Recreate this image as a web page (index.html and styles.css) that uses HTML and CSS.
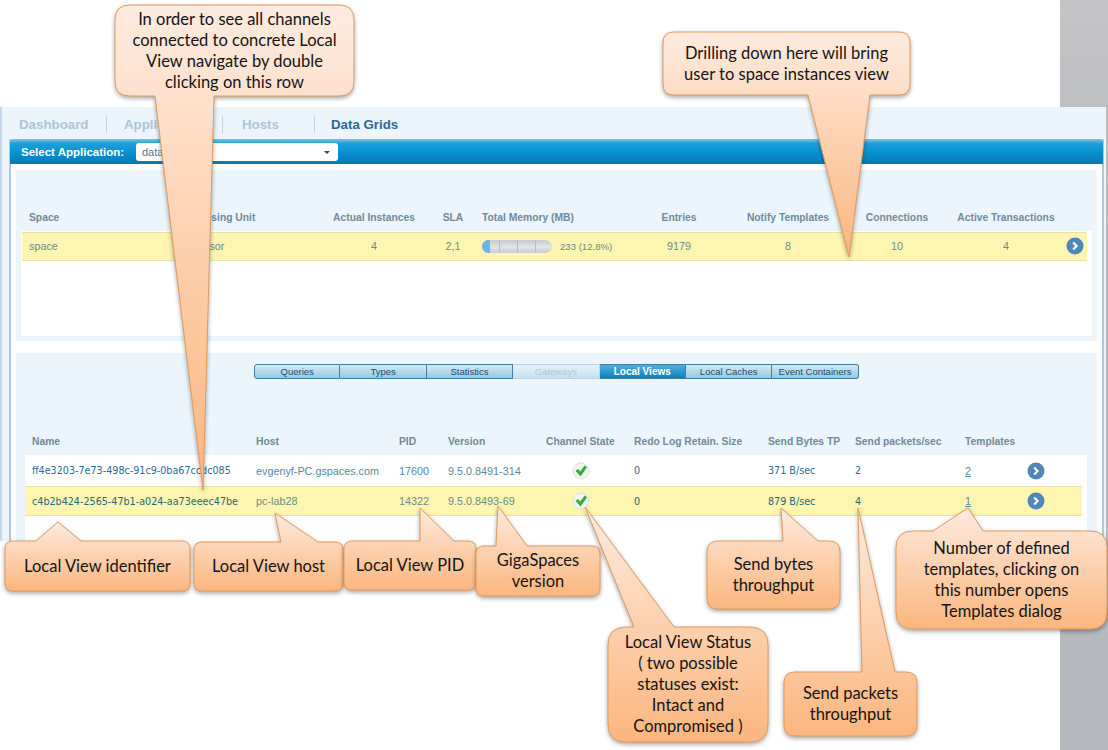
FILE: index.html
```html
<!DOCTYPE html>
<html lang="en">
<head>
  <meta charset="UTF-8" />
  <title>Data Grids - Local Views</title>
  <link rel="stylesheet" href="styles.css">
</head>
<body>
  <svg class="icon-defs" width="0" height="0" aria-hidden="true">
    <symbol id="drill" viewBox="0 0 18 18">
      <circle cx="9" cy="9" r="8.5" fill="#4f88b8" />
      <path d="M7.2 5.4 10.6 9 7.2 12.6" fill="none" stroke="#fff" stroke-width="2.2" />
    </symbol>
    <symbol id="ok" viewBox="0 0 18 18">
      <circle cx="9" cy="9" r="8" fill="#f4f7f0" stroke="#d9e3d6" />
      <path d="M3.4 8.8 6.2 7 8.2 9.6 12.6 3.6 15 5.2 8.6 14.6Z" fill="#2fae3c" />
    </symbol>
    <linearGradient id="calloutFill" x1="0" y1="0" x2="0" y2="1">
      <stop offset="0" stop-color="#feebdf" />
      <stop offset="1" stop-color="#fbb67e" />
    </linearGradient>
  </svg>

  <div class="page">
    <div class="panel">
      <nav class="nav">
        <span class="nav-item">Dashboard</span>
        <span class="nav-item">Applications</span>
        <span class="nav-item">Hosts</span>
        <span class="nav-item active">Data Grids</span>
      </nav>

      <div class="card">
        <div class="app-bar">
          <span class="app-label">Select Application:</span>
          <div class="app-select">datagrid<span class="caret"></span></div>
        </div>

        <section class="section top">
          <div class="cols-space head">
            <span>Space</span>
            <span>Processing Unit</span>
            <span class="mid">Actual Instances</span>
            <span class="mid">SLA</span>
            <span>Total Memory (MB)</span>
            <span class="mid">Entries</span>
            <span class="mid">Notify Templates</span>
            <span class="mid">Connections</span>
            <span class="mid">Active Transactions</span>
          </div>
          <div class="table space-table">
            <div class="cols-space row picked space-row">
              <span>space</span>
              <span>processor</span>
              <span class="mid">4</span>
              <span class="mid">2,1</span>
              <span class="memory">
                <span class="meter"><span class="meter-fill" style="width: 11%"></span></span>
                233 (12.8%)
              </span>
              <span class="mid">9179</span>
              <span class="mid">8</span>
              <span class="mid">10</span>
              <span class="mid">4</span>
              <svg class="drill"><use href="#drill" /></svg>
            </div>
          </div>
        </section>

        <section class="section bottom">
          <div class="tabs">
            <span class="tab">Queries</span>
            <span class="tab">Types</span>
            <span class="tab">Statistics</span>
            <span class="tab off">Gateways</span>
            <span class="tab on">Local Views</span>
            <span class="tab">Local Caches</span>
            <span class="tab">Event Containers</span>
          </div>

          <div class="cols-view head view-head">
            <span>Name</span>
            <span>Host</span>
            <span>PID</span>
            <span>Version</span>
            <span>Channel State</span>
            <span>Redo Log Retain. Size</span>
            <span>Send Bytes TP</span>
            <span>Send packets/sec</span>
            <span>Templates</span>
          </div>

          <div class="table view-table">
            <div class="cols-view row view-row">
              <span class="mono">ff4e3203-7e73-498c-91c9-0ba67ccdc085</span>
              <span>evgenyf-PC.gspaces.com</span>
              <span>17600</span>
              <span>9.5.0.8491-314</span>
              <svg class="state"><use href="#ok" /></svg>
              <span class="mono">0</span>
              <span class="mono">371 B/sec</span>
              <span class="mono">2</span>
              <a class="link">2</a>
              <svg class="drill"><use href="#drill" /></svg>
            </div>
            <div class="cols-view row picked view-row picked-view">
              <span class="mono">c4b2b424-2565-47b1-a024-aa73eeec47be</span>
              <span>pc-lab28</span>
              <span>14322</span>
              <span>9.5.0.8493-69</span>
              <svg class="state"><use href="#ok" /></svg>
              <span class="mono">0</span>
              <span class="mono">879 B/sec</span>
              <span class="mono">4</span>
              <a class="link">1</a>
              <svg class="drill"><use href="#drill" /></svg>
            </div>
          </div>
        </section>
      </div>
    </div>
  </div>

  <!-- callout shapes, the tails point at the columns they explain -->
  <svg class="callout-shapes" width="1108" height="750" aria-hidden="true">
    <path d="M130 5H339Q354 5 354 20V81Q354 96 339 96H214L203 490 155 96H130Q115 96 115 81V20Q115 5 130 5Z" />
    <path d="M674 32H899Q910 32 910 43V84Q910 95 899 95H870L849 257 808 95H674Q663 95 663 84V43Q663 32 674 32Z" />
    <path d="M13 541H36L58 522 81 541H182Q190 541 190 549V583Q190 591 182 591H13Q5 591 5 583V549Q5 541 13 541Z" />
    <path d="M202 542H281L275 513 318 542H335Q343 542 343 550V583Q343 591 335 591H202Q194 591 194 583V550Q194 542 202 542Z" />
    <path d="M352 541H420L420 508 454 541H468Q476 541 476 549V582Q476 590 468 590H352Q344 590 344 582V549Q344 541 352 541Z" />
    <path d="M484 546H496L498 506 527 546H592Q600 546 600 554V588Q600 596 592 596H484Q476 596 476 588V554Q476 546 484 546Z" />
    <path d="M626 627H634L585 507 674 627H750Q768 627 768 645V724Q768 742 750 742H626Q608 742 608 724V645Q608 627 626 627Z" />
    <path d="M718 541H783L781 508 818 541H829Q840 541 840 552V598Q840 609 829 609H718Q707 609 707 598V552Q707 541 718 541Z" />
    <path d="M795 672H862L858 508 895 672H906Q917 672 917 683V725Q917 736 906 736H795Q784 736 784 725V683Q784 672 795 672Z" />
    <path d="M913 531H933L968 508 983 531H1090Q1107 531 1107 548V612Q1107 629 1090 629H913Q896 629 896 612V548Q896 531 913 531Z" />
  </svg>

  <div class="callout c-row">In order to see all channels<br>connected to concrete Local<br>View navigate by double<br>clicking on this row</div>
  <div class="callout c-drill">Drilling down here will bring<br>user to space instances view</div>
  <div class="callout c-name">Local View identifier</div>
  <div class="callout c-host">Local View host</div>
  <div class="callout c-pid">Local View PID</div>
  <div class="callout c-version">GigaSpaces<br>version</div>
  <div class="callout c-status">Local View Status<br>( two possible<br>statuses exist:<br>Intact and<br>Compromised )</div>
  <div class="callout c-bytes">Send bytes<br>throughput</div>
  <div class="callout c-packets">Send packets<br>throughput</div>
  <div class="callout c-templates">Number of defined<br>templates, clicking on<br>this number opens<br>Templates dialog</div>
</body>
</html>
```

FILE: styles.css
```css
html, body {
  margin: 0;
  padding: 0;
}
body {
  font-family: "Liberation Sans", Arial, sans-serif;
  font-size: 11px;
  position: relative;
  width: 1108px;
  height: 750px;
  overflow: hidden;
  background: #fff;
}
.icon-defs {
  position: absolute;
}
.page {
  height: 750px;
  padding-top: 107px;
  box-sizing: border-box;
  background:
    linear-gradient(to right, #fff 1060px, transparent 1060px),
    linear-gradient(#c4c3c6, #b6b9bd 30%);
}

/* application frame */
.panel {
  width: 1106px;
  height: 434px;
  box-sizing: border-box;
  border-left: 2px solid #c6d9ea;
  background: #ecf5fb;
  overflow: hidden;
}
.nav {
  display: grid;
  grid-template-columns: 105px 116px 92px auto;
  align-items: center;
  height: 34px;
  margin-bottom: -2px;
  font-size: 13.3px;
  font-weight: bold;
  color: #a9c6d8;
}
.nav-item {
  height: 17px;
  line-height: 17px;
  padding-left: 17px;
  border-right: 1px solid #bfd4e1;
}
.nav-item:nth-child(3) {
  padding-left: 19px;
}
.nav-item.active {
  padding-left: 16px;
  border-right: 0;
  color: #2a6a96;
}
.card {
  width: 1095px;
  height: 402px;
  margin-left: 7px;
  box-sizing: border-box;
  border: solid #a9cbdf;
  border-width: 0 2px;
  background: #fff;
}
.app-bar {
  display: flex;
  align-items: center;
  height: 25px;
  margin: 0 -1px;
  padding-left: 11px;
  border-radius: 3px 3px 0 0;
  background: linear-gradient(#78c3e7, #1f9fdb 18%, #0a96d6 45%, #0679b4);
}
.app-label {
  width: 115px;
  font-size: 11.5px;
  font-weight: bold;
  color: #fff;
}
.app-select {
  position: relative;
  width: 196px;
  height: 18px;
  line-height: 18px;
  padding-left: 6px;
  border-radius: 3px;
  background: #fff;
  color: #4d7a98;
}
.caret {
  position: absolute;
  right: 8px;
  top: 8px;
  border: 3px solid transparent;
  border-top-color: #444;
  border-bottom: 0;
}

/* sections */
.section {
  width: 1081px;
  margin-left: 5px;
  background: #ebf5fb;
}
.section.top {
  height: 171px;
  margin-top: 6px;
  padding-top: 38px;
  box-sizing: border-box;
}
.section.bottom {
  height: 200px;
  margin-top: 12px;
  padding-top: 11px;
  box-sizing: border-box;
}
.table {
  background: #fff;
}
.space-table {
  width: 1071px;
  height: 105px;
  margin: 5px 0 0 5px;
  padding: 1px 0 0 1px;
  box-sizing: border-box;
}
.view-table {
  width: 1062px;
  height: 100px;
  margin: 5px 0 0 9px;
}

/* column sets */
.cols-space {
  display: grid;
  grid-template-columns: 148px 147px 100px 58px 150px 94px 124px 94px 124px auto;
  align-items: center;
  padding-left: 7px;
}
.head.cols-space {
  padding-left: 13px;
  font-size: 10.3px;
}
.cols-view {
  display: grid;
  grid-template-columns: 224px 143px 49px 98px 88px 134px 87px 110px 62px auto;
  align-items: center;
  padding-left: 7px;
}
.head.cols-view {
  padding-left: 16px;
}
.head {
  height: 18px;
  font-size: 10.3px;
  font-weight: bold;
  color: #71899a;
}
.view-head {
  margin-top: 53px;
}
.mid {
  text-align: center;
}

/* rows */
.row {
  font-size: 10.8px;
  color: #5a87a5;
}
.picked {
  background: #fdf5b0;
  border: solid #ecdfab;
  border-width: 1px 0;
  box-sizing: border-box;
  color: #6c8b8a;
}
.space-row {
  width: 1065px;
  height: 29px;
  padding-bottom: 1px;
}
.view-row {
  height: 31px;
}
.picked-view {
  width: 1057px;
  height: 30px;
}
.mono {
  font-family: "DejaVu Sans", Verdana, sans-serif;
  font-size: 9.6px;
  color: #2c6b93;
}
.picked .mono {
  color: #1f6a78;
}
.link {
  color: #5a87a5;
  text-decoration: underline;
}
.drill {
  width: 18px;
  height: 18px;
}
.space-row .drill {
  margin-left: -2px;
}
.state {
  width: 18px;
  height: 18px;
  margin-left: 26px;
}

/* memory meter */
.memory {
  display: flex;
  align-items: center;
  gap: 8px;
  font-size: 9.6px;
}
.meter {
  display: block;
  width: 70px;
  height: 13px;
  border-radius: 7px;
  overflow: hidden;
  background:
    repeating-linear-gradient(to right, transparent 0 17px, #b9bcc1 17px 18px),
    linear-gradient(#c6c9ce, #e3e4e6 55%, #c9cbd0);
}
.meter-fill {
  display: block;
  height: 13px;
  background: #6ab6e4;
}

/* tabs */
.tabs {
  display: flex;
  width: 605px;
  height: 15px;
  margin-left: 238px;
}
.tab {
  width: 86.4px;
  box-sizing: border-box;
  line-height: 13px;
  text-align: center;
  font-size: 9.5px;
  color: #1f4c6a;
  border: 1px solid #427fa4;
  border-left-width: 0;
  background: linear-gradient(#d4e9f3, #93c9e2);
}
.tab:first-child {
  border-left-width: 1px;
  border-radius: 3px 0 0 3px;
}
.tab:last-child {
  border-radius: 0 3px 3px 0;
}
.tab.off {
  color: #b4c5cd;
  border-color: #b7d3e1;
  background: linear-gradient(#e6f2f7, #c7e0ec);
}
.tab.on {
  font-size: 10px;
  font-weight: bold;
  color: #fff;
  background: linear-gradient(#4fb0de, #0b7fbb);
}

/* callouts sit over the page */
.callout-shapes {
  position: absolute;
  left: 0;
  top: 0;
}
.callout-shapes path {
  fill: url(#calloutFill);
  stroke: #e29b5c;
  stroke-width: 1;
  filter: drop-shadow(0 2px 2px rgba(0, 0, 0, 0.35));
}
.callout {
  position: absolute;
  display: flex;
  align-items: center;
  justify-content: center;
  box-sizing: border-box;
  text-align: center;
  font-family: Lato, "Open Sans", sans-serif;
  font-size: 16.5px;
  line-height: 21px;
  color: #141414;
}
.c-row { left: 115px; top: 5px; width: 239px; height: 91px; }
.c-drill { left: 663px; top: 32px; width: 247px; height: 63px; }
.c-name { left: 5px; top: 541px; width: 185px; height: 50px; }
.c-host { left: 194px; top: 542px; width: 149px; height: 49px; }
.c-pid { left: 344px; top: 541px; width: 132px; height: 49px; }
.c-version { left: 476px; top: 546px; width: 124px; height: 50px; }
.c-status { left: 608px; top: 627px; width: 160px; height: 115px; }
.c-bytes { left: 707px; top: 541px; width: 133px; height: 68px; }
.c-packets { left: 784px; top: 672px; width: 133px; height: 64px; }
.c-templates { left: 896px; top: 531px; width: 211px; height: 98px; }
```
